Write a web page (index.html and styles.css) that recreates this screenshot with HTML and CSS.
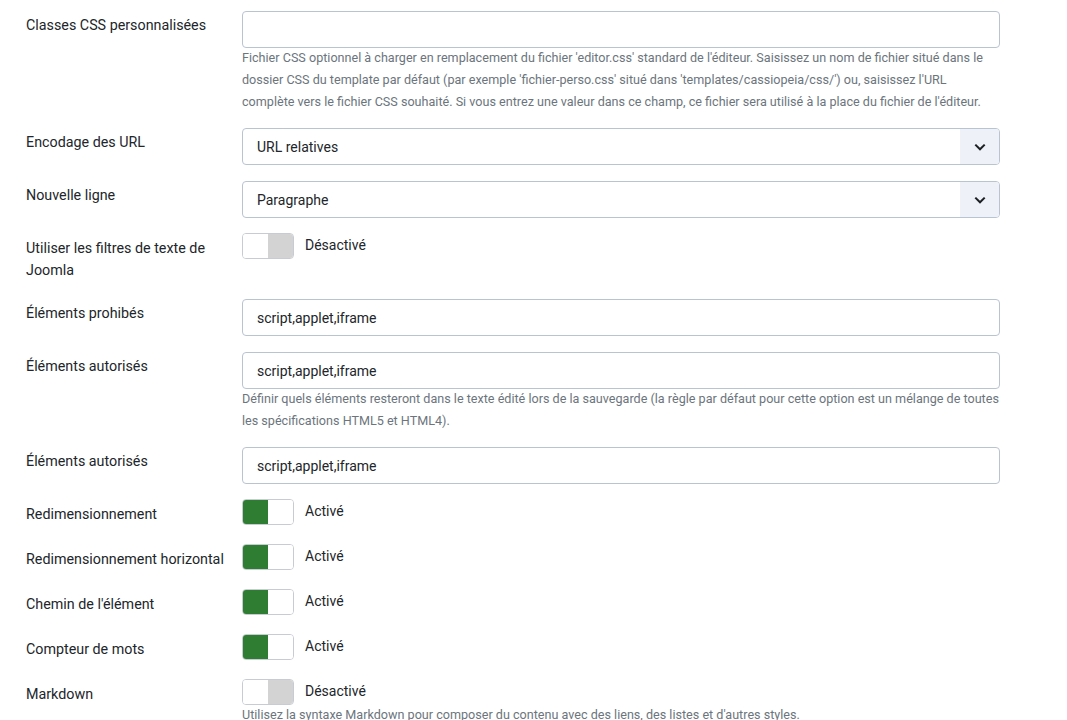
FILE: index.html
```html
<!DOCTYPE html>
<html lang="fr">
<head>
    <meta charset="UTF-8">
    <meta name="viewport" content="width=device-width, initial-scale=1.0">
    <title>Options de l'éditeur</title>
    <link rel="stylesheet" href="styles.css">
</head>
<body>

    <div class="options">
        <div class="control-group">
            <label class="control-label" for="css_classes">Classes CSS personnalisées</label>
            <div class="controls">
                <input type="text" id="css_classes" class="form-control">
                <div class="form-text">Fichier CSS optionnel à charger en remplacement du fichier 'editor.css' standard de l'éditeur. Saisissez un nom de fichier situé dans le dossier CSS du template par défaut (par exemple 'fichier-perso.css' situé dans 'templates/cassiopeia/css/') ou, saisissez l'URL complète vers le fichier CSS souhaité. Si vous entrez une valeur dans ce champ, ce fichier sera utilisé à la place du fichier de l'éditeur.</div>
            </div>
        </div>

        <div class="control-group">
            <label class="control-label" for="url_encoding">Encodage des URL</label>
            <div class="controls">
                <div class="select-wrap">
                    <select id="url_encoding" class="form-select">
                        <option>URL relatives</option>
                        <option>URL absolues</option>
                    </select>
                    <span class="select-arrow"><svg width="14" height="14" viewBox="0 0 14 14"><path d="M2.3 4.6 L7 9.3 L11.7 4.6" fill="none" stroke="#1c1f23" stroke-width="2"/></svg></span>
                </div>
            </div>
        </div>

        <div class="control-group">
            <label class="control-label" for="newline">Nouvelle ligne</label>
            <div class="controls">
                <div class="select-wrap">
                    <select id="newline" class="form-select">
                        <option>Paragraphe</option>
                        <option>Saut de ligne</option>
                    </select>
                    <span class="select-arrow"><svg width="14" height="14" viewBox="0 0 14 14"><path d="M2.3 4.6 L7 9.3 L11.7 4.6" fill="none" stroke="#1c1f23" stroke-width="2"/></svg></span>
                </div>
            </div>
        </div>

        <div class="control-group">
            <span class="control-label">Utiliser les filtres de texte de Joomla</span>
            <div class="controls switch-row">
                <span class="switcher"><span class="half"></span><span class="half"></span></span>
                <span class="switch-text">Désactivé</span>
            </div>
        </div>

        <div class="control-group">
            <label class="control-label" for="prohibited">Éléments prohibés</label>
            <div class="controls">
                <input type="text" id="prohibited" class="form-control" value="script,applet,iframe">
            </div>
        </div>

        <div class="control-group">
            <label class="control-label" for="allowed">Éléments autorisés</label>
            <div class="controls">
                <input type="text" id="allowed" class="form-control" value="script,applet,iframe">
                <div class="form-text">Définir quels éléments resteront dans le texte édité lors de la sauvegarde (la règle par défaut pour cette option est un mélange de toutes les spécifications HTML5 et HTML4).</div>
            </div>
        </div>

        <div class="control-group">
            <label class="control-label" for="allowed2">Éléments autorisés</label>
            <div class="controls">
                <input type="text" id="allowed2" class="form-control" value="script,applet,iframe">
            </div>
        </div>

        <div class="control-group">
            <span class="control-label">Redimensionnement</span>
            <div class="controls switch-row">
                <span class="switcher on"><span class="half"></span><span class="half"></span></span>
                <span class="switch-text">Activé</span>
            </div>
        </div>

        <div class="control-group">
            <span class="control-label">Redimensionnement horizontal</span>
            <div class="controls switch-row">
                <span class="switcher on"><span class="half"></span><span class="half"></span></span>
                <span class="switch-text">Activé</span>
            </div>
        </div>

        <div class="control-group">
            <span class="control-label">Chemin de l'élément</span>
            <div class="controls switch-row">
                <span class="switcher on"><span class="half"></span><span class="half"></span></span>
                <span class="switch-text">Activé</span>
            </div>
        </div>

        <div class="control-group">
            <span class="control-label">Compteur de mots</span>
            <div class="controls switch-row">
                <span class="switcher on"><span class="half"></span><span class="half"></span></span>
                <span class="switch-text">Activé</span>
            </div>
        </div>

        <div class="control-group">
            <span class="control-label">Markdown</span>
            <div class="controls">
                <div class="switch-row">
                    <span class="switcher"><span class="half"></span><span class="half"></span></span>
                    <span class="switch-text">Désactivé</span>
                </div>
                <div class="form-text">Utilisez la syntaxe Markdown pour composer du contenu avec des liens, des listes et d'autres styles.</div>
            </div>
        </div>
    </div>

</body>
</html>
```

FILE: styles.css
```css
body {
    margin: 0;
    background-color: #fff;
    font-family: Roboto, "Noto Sans", sans-serif;
    color: #22262a;
}

.options {
    padding: 11px 0 0 26px;
}

.control-group {
    display: grid;
    grid-template-columns: 216px 758px;
    margin-bottom: 16px;
}

.control-label {
    font-size: 14.3px;
    line-height: 22px;
    padding: 3px 10px 2px 0;
}

.form-control, .form-select {
    display: block;
    box-sizing: border-box;
    width: 100%;
    height: 37px;
    margin: 0;
    padding: 0 14px;
    border: 1px solid #b9c4d1;
    border-radius: 4px;
    background: #fff;
    font-family: Roboto, sans-serif;
    font-size: 14px;
    color: #22262a;
}

.select-wrap {
    position: relative;
}

.form-select {
    appearance: none;
    -webkit-appearance: none;
}

.select-arrow {
    position: absolute;
    top: 1px;
    right: 1px;
    bottom: 1px;
    width: 39px;
    background-color: #eef2f8;
    border-radius: 0 3px 3px 0;
    display: flex;
    align-items: center;
    justify-content: center;
}

.form-text {
    font-size: 12.6px;
    line-height: 22px;
    color: #6c757d;
    margin: -1px 0 -1px;
}

.switch-row {
    display: flex;
    align-items: flex-start;
    gap: 11px;
    min-height: 29px;
}

.switch-row + .form-text {
    margin-top: -5px;
}

.switcher {
    display: flex;
    box-sizing: border-box;
    width: 52px;
    height: 26px;
    margin-top: -1px;
    border: 1px solid #c8ccd2;
    border-radius: 4px;
    overflow: hidden;
}

.switcher .half {
    flex: 1;
    background-color: #fff;
}

.switcher .half:last-child {
    background-color: #d3d3d3;
}

.switcher.on .half:first-child {
    background-color: #2e7d32;
}

.switcher.on .half:last-child {
    background-color: #fff;
}

.switch-text {
    font-size: 14px;
    line-height: 22px;
}
```
